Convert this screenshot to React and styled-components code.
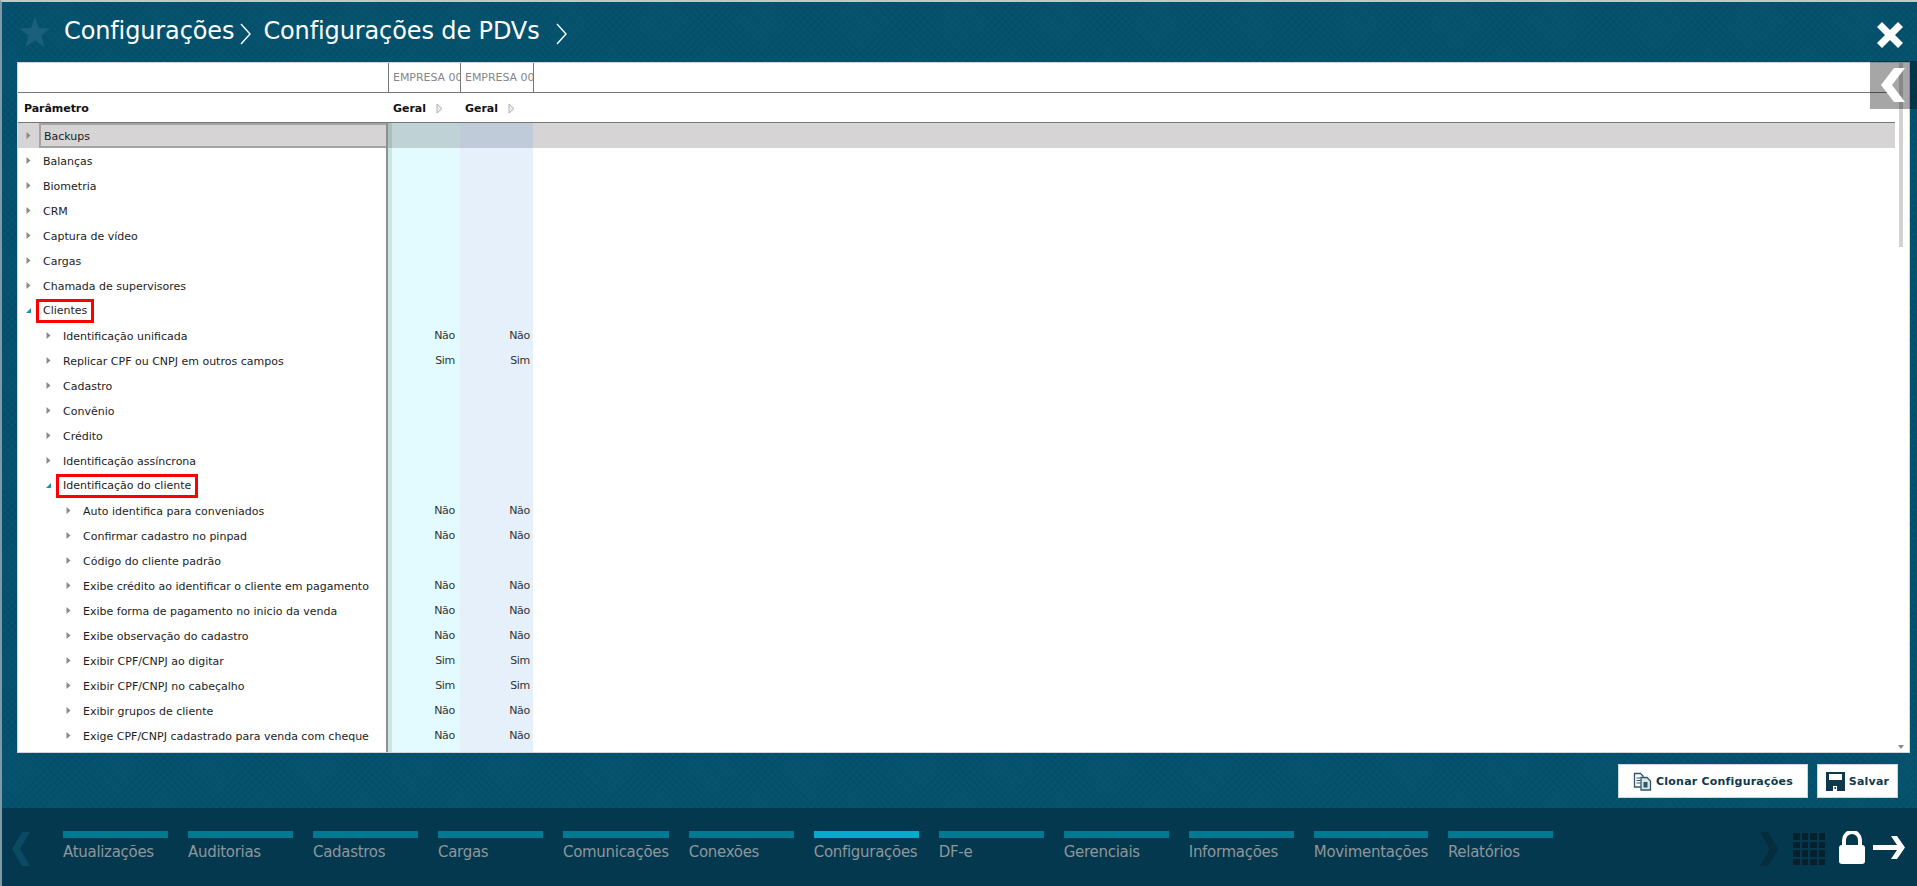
import styled, { createGlobalStyle } from 'styled-components';

const GlobalStyle = createGlobalStyle`
  html, body { margin: 0; padding: 0; height: 100%; overflow: hidden; }
  body { font-family: "DejaVu Sans", "Liberation Sans", sans-serif; }
  * { box-sizing: border-box; }
`;

/* fundo com trama */
const Shell = styled.div`
  position: relative;
  height: 886px;
  display: flex;
  flex-direction: column;
  overflow: hidden;
  border-top: 2px solid #c3c8ca;
  border-left: 2px solid #7f9aa6;
  background-color: #05536f;
  background-image:
    repeating-linear-gradient(45deg, rgba(0,0,0,.055) 0 1px, transparent 1px 5px),
    repeating-linear-gradient(-45deg, rgba(0,0,0,.055) 0 1px, transparent 1px 5px);
`;

const Header = styled.header`
  height: 60px;
  flex: none;
  display: flex;
  align-items: center;
  padding: 0 14px 0 18px;
  color: #fff;
`;
const StarIcon = styled.svg`
  width: 30px;
  height: 30px;
  flex: none;
  margin-right: 14px;
`;
const Crumb = styled.span`
  font-size: 24px;
  letter-spacing: -.12px;
  margin-left: ${p => p.$gap || 0}px;
  margin-bottom: 2px;
  white-space: nowrap;
`;
const CrumbArrowIcon = styled.svg`
  width: 11px;
  height: 22px;
  flex: none;
  margin-left: ${p => p.$gap}px;
  margin-top: 3px;
`;
const CloseButton = styled.svg`
  margin-left: auto;
  width: 26px;
  height: 26px;
  margin-top: 5px;
`;

const Panel = styled.main`
  height: 691px;
  flex: none;
  margin: 0 7px 0 15px;
  display: flex;
  background: #fff;
  border: 1px solid #d0d6d8;
  overflow: hidden;
`;
const TableArea = styled.div`
  width: 1877px;
  flex: none;
  overflow: hidden;
`;

const Row = styled.div`
  display: grid;
  grid-template-columns: 370px 72px 73px 1fr;
  height: ${p => p.$height || 25}px;
  background: ${p => (p.$selected ? '#d6d4d5' : 'transparent')};
`;
const HeadRow = styled(Row)`
  border-bottom: 1px solid #777;
`;
const HeadCell = styled.div`
  display: flex;
  align-items: center;
  padding: ${p => (p.$ruled ? '0 2px 0 4px' : '1px 2px 0 5px')};
  overflow: hidden;
  white-space: nowrap;
  border-left: ${p => (p.$ruled ? '1px solid #777' : 'none')};
`;
const CompanyName = styled.span`
  font-size: 11px;
  letter-spacing: -.05px;
  color: #868686;
`;
const ColumnTitle = styled.span`
  font-size: 11px;
  font-weight: bold;
  letter-spacing: -.05px;
  color: #111;
`;
const SortArrow = styled.svg`
  width: 7px;
  height: 11px;
  margin-left: 10px;
`;
const ParamTitle = styled(ColumnTitle)`
  margin-left: 1px;
`;

const LabelCell = styled.div`
  display: flex;
  align-items: center;
  gap: 12px;
  padding-left: ${p => 8 + p.$level * 20}px;
  border-right: 2px solid #8f8f8f;
  font-size: 11px;
  color: #1c1c1c;
  white-space: nowrap;
`;
const LabelText = styled.span`
  display: flex;
  align-items: center;
  flex: ${p => (p.$selected ? 1 : 'none')};
  align-self: stretch;
  margin-left: -4px;
  padding: 1px 4px 0 ${p => (p.$selected ? 3 : 4)}px;
  border: ${p => (p.$selected ? '2px solid #a3a3a3' : 'none')};
  border-right: none;
`;
const MarkedText = styled.span`
  margin: 1px 0 0 -4px;
  padding: 0 4px;
  line-height: 18px;
  outline: 3px solid #f00;
`;
const Caret = styled.svg`
  width: 5px;
  height: 7px;
  flex: none;
`;
const ValueCell = styled.div`
  display: flex;
  align-items: center;
  justify-content: flex-end;
  padding: 0 ${p => p.$pad}px 0 0;
  font-size: 11px;
  letter-spacing: -.3px;
  color: #333;
  background: ${p => p.$bg};
  border-left: ${p => (p.$strip ? `4px solid ${p.$strip}` : 'none')};
`;

const ScrollRail = styled.div`
  width: 5px;
  margin-left: 3px;
  flex: none;
  display: flex;
  flex-direction: column;
  align-items: center;
`;
const ScrollThumb = styled.div`
  width: 4px;
  height: 184px;
  background: #d2d2d2;
`;
const ScrollDown = styled.div`
  margin-top: auto;
  margin-bottom: 3px;
  border: 3px solid transparent;
  border-top: 4px solid #888;
  border-bottom: 0;
`;

/* aba que fica por cima da tabela */
const SideTab = styled.div`
  position: absolute;
  top: 59px;
  right: 0;
  width: 47px;
  height: 48px;
  background: rgba(0,0,0,.35);
  display: flex;
  align-items: center;
  justify-content: center;
`;

const Actions = styled.div`
  height: 55px;
  flex: none;
  display: flex;
  justify-content: flex-end;
  align-items: flex-start;
  gap: 9px;
  padding: 11px 19px 0 0;
`;
const ActionButton = styled.button`
  height: 34px;
  width: ${p => p.$width}px;
  display: flex;
  align-items: center;
  justify-content: center;
  gap: 4px;
  background: #fff;
  border: 1px solid #cfd6d9;
  padding: 0;
  font-family: inherit;
  font-size: 11px;
  font-weight: bold;
  letter-spacing: .22px;
  color: #10384c;
`;

const Dock = styled.nav`
  flex: 1;
  display: flex;
  align-items: flex-start;
  position: relative;
  background: #03384f;
  padding: 23px 11px 0 10px;
`;
const DockChevron = styled.svg`
  width: 18px;
  height: 34px;
  flex: none;
  margin-top: 1px;
`;
const NavList = styled.div`
  display: flex;
  gap: 20px;
  margin-left: 33px;
`;
const NavItem = styled.div`
  min-width: 105px;
  font-size: 15px;
  letter-spacing: -.3px;
  color: #8d969b;
  white-space: nowrap;
  &::before {
    content: '';
    display: block;
    height: 7px;
    margin-bottom: 5px;
    background: ${p => (p.$active ? '#00abcd' : '#007a93')};
  }
`;
const DockTools = styled.div`
  margin-left: auto;
  display: flex;
  align-items: flex-start;
`;
const AppGrid = styled.div`
  display: grid;
  grid-template-columns: repeat(4, 6.5px);
  grid-auto-rows: 6.5px;
  gap: 2px;
  margin: 2px 0 0 15px;
`;
const AppDot = styled.i`
  background: #06202d;
`;
const LockIcon = styled.svg`
  width: 26px;
  height: 33px;
  margin-left: 14px;
`;
const ExitIcon = styled.svg`
  width: 32px;
  height: 23px;
  margin: 5px 1px 0 8px;
`;

const rows = [
  ['Backups', 0, '', 'sel'],
  ['Balanças', 0, ''],
  ['Biometria', 0, ''],
  ['CRM', 0, ''],
  ['Captura de vídeo', 0, ''],
  ['Cargas', 0, ''],
  ['Chamada de supervisores', 0, ''],
  ['Clientes', 0, '', 'open'],
  ['Identificação unificada', 1, 'Não'],
  ['Replicar CPF ou CNPJ em outros campos', 1, 'Sim'],
  ['Cadastro', 1, ''],
  ['Convênio', 1, ''],
  ['Crédito', 1, ''],
  ['Identificação assíncrona', 1, ''],
  ['Identificação do cliente', 1, '', 'open'],
  ['Auto identifica para conveniados', 2, 'Não'],
  ['Confirmar cadastro no pinpad', 2, 'Não'],
  ['Código do cliente padrão', 2, ''],
  ['Exibe crédito ao identificar o cliente em pagamento', 2, 'Não'],
  ['Exibe forma de pagamento no inicio da venda', 2, 'Não'],
  ['Exibe observação do cadastro', 2, 'Não'],
  ['Exibir CPF/CNPJ ao digitar', 2, 'Sim'],
  ['Exibir CPF/CNPJ no cabeçalho', 2, 'Sim'],
  ['Exibir grupos de cliente', 2, 'Não'],
  ['Exige CPF/CNPJ cadastrado para venda com cheque', 2, 'Não'],
  ['', -1, ''],
];

const navItems = ['Atualizações', 'Auditorias', 'Cadastros', 'Cargas', 'Comunicações', 'Conexões', 'Configurações', 'DF-e', 'Gerenciais', 'Informações', 'Movimentações', 'Relatórios'];

const Star = () => (
  <StarIcon viewBox="0 0 30 30">
    <polygon points="15,0 19,11 30,11.5 21.5,18.5 24.5,30 15,23.5 5.5,30 8.5,18.5 0,11.5 11,11" fill="#1a5f7b" />
  </StarIcon>
);

const CrumbArrow = ({ gap }) => (
  <CrumbArrowIcon $gap={gap} viewBox="0 0 11 22">
    <path d="M1 1l9 10-9 10" fill="none" stroke="#fff" strokeWidth="1.4" />
  </CrumbArrowIcon>
);

const TreeCaret = ({ open }) => (
  <Caret viewBox="0 0 5 7">
    {open
      ? <polygon points="0,6 5,6 5,1" fill="#1b93ab" />
      : <polygon points="0.5,0 4.5,3.5 0.5,7" fill="#8a8a8a" />}
  </Caret>
);

const HeaderArrow = () => (
  <SortArrow viewBox="0 0 7 11">
    <polygon points="1,1 6,5.5 1,10" fill="#f0f0f0" stroke="#adadad" />
  </SortArrow>
);

const CloneIcon = () => (
  <svg width="19" height="19" viewBox="0 0 19 19">
    <path d="M1.5 1.5h6l2.500 2.500v11h-8.500z" fill="#fff" stroke="#2f5568" strokeWidth="1.3" />
    <path d="M3.500 6h4M3.500 8.500h4M3.500 11h4" stroke="#2f5568" />
    <path d="M8 5.500h6l3.500 3.500v9h-9.500z" fill="#d9e4e8" stroke="#2f5568" strokeWidth="1.3" />
    <path d="M10.500 10h4v5.500h-4z" fill="#2f5568" />
  </svg>
);

const SaveIcon = () => (
  <svg width="19" height="19" viewBox="0 0 19 19">
    <path d="M0 0h19v19h-19z" fill="#10384c" />
    <path d="M3 2h13v6h-13z" fill="#fff" />
    <path d="M7 14h4v5h-4z" fill="#fff" />
    <path d="M8.500 15h1.500v2h-1.500z" fill="#10384c" />
  </svg>
);

function App() {
  return (
    <>
      <GlobalStyle />
      <Shell>
        <Header>
          <Star />
          <Crumb>Configurações</Crumb>
          <CrumbArrow gap={6} />
          <Crumb $gap={12}>Configurações de PDVs</Crumb>
          <CrumbArrow gap={16} />
          <CloseButton viewBox="0 0 26 26">
            <path d="M5 0l8 8 8-8 5 5-8 8 8 8-5 5-8-8-8 8-5-5 8-8-8-8z" fill="#fff" />
          </CloseButton>
        </Header>

        <Panel>
          <TableArea>
            <HeadRow $height={30}>
              <HeadCell />
              <HeadCell $ruled><CompanyName>EMPRESA 001</CompanyName></HeadCell>
              <HeadCell $ruled><CompanyName>EMPRESA 001</CompanyName></HeadCell>
              <HeadCell $ruled />
            </HeadRow>
            <HeadRow $height={30}>
              <HeadCell><ParamTitle>Parâmetro</ParamTitle></HeadCell>
              <HeadCell><ColumnTitle>Geral</ColumnTitle><HeaderArrow /></HeadCell>
              <HeadCell><ColumnTitle>Geral</ColumnTitle><HeaderArrow /></HeadCell>
              <HeadCell />
            </HeadRow>
            {rows.map(([label, level, value, kind], i) => {
              const selected = kind === 'sel';
              const open = kind === 'open';
              return (
                <Row key={i} $selected={selected}>
                  <LabelCell $level={Math.max(level, 0)}>
                    {level >= 0 && <TreeCaret open={open} />}
                    {open
                      ? <MarkedText>{label}</MarkedText>
                      : <LabelText $selected={selected}>{label}</LabelText>}
                  </LabelCell>
                  <ValueCell $pad={5} $strip={selected ? '#a9c0bd' : '#cbe5e1'} $bg={selected ? '#bfd3d6' : '#e3fbff'}>{value}</ValueCell>
                  <ValueCell $pad={3} $bg={selected ? '#c0cbd9' : '#e6f0fb'}>{value}</ValueCell>
                </Row>
              );
            })}
          </TableArea>
          <ScrollRail>
            <ScrollThumb />
            <ScrollDown />
          </ScrollRail>
        </Panel>

        <SideTab>
          <svg width="25" height="34" viewBox="0 0 25 34">
            <polygon points="13,0 24,0 11,17 24,34 13,34 0,17" fill="#fff" />
          </svg>
        </SideTab>

        <Actions>
          <ActionButton $width={190}><CloneIcon />Clonar Configurações</ActionButton>
          <ActionButton $width={81}><SaveIcon />Salvar</ActionButton>
        </Actions>

        <Dock>
          <DockChevron viewBox="0 0 18 34">
            <polygon points="10,0 18,0 8,17 18,34 10,34 0,17" fill="#0a4a62" />
          </DockChevron>
          <NavList>
            {navItems.map(item => (
              <NavItem key={item} $active={item === 'Configurações'}>{item}</NavItem>
            ))}
          </NavList>
          <DockTools>
            <DockChevron viewBox="0 0 18 34">
              <polygon points="0,0 8,0 18,17 8,34 0,34 10,17" fill="#062c3e" />
            </DockChevron>
            <AppGrid>
              {Array.from({ length: 16 }, (_, i) => <AppDot key={i} />)}
            </AppGrid>
            <LockIcon viewBox="0 0 26 33">
              <path d="M5 15v-6a8 8 0 0 1 16 0v6" fill="none" stroke="#fff" strokeWidth="4" />
              <rect x="0" y="14" width="26" height="19" rx="3" fill="#fff" />
            </LockIcon>
            <ExitIcon viewBox="0 0 32 23">
              <polygon points="18,0 24,0 32,11.500 24,23 18,23 24,14 0,14 0,9 24,9" fill="#fff" />
            </ExitIcon>
          </DockTools>
        </Dock>
      </Shell>
    </>
  );
}

export default App;
